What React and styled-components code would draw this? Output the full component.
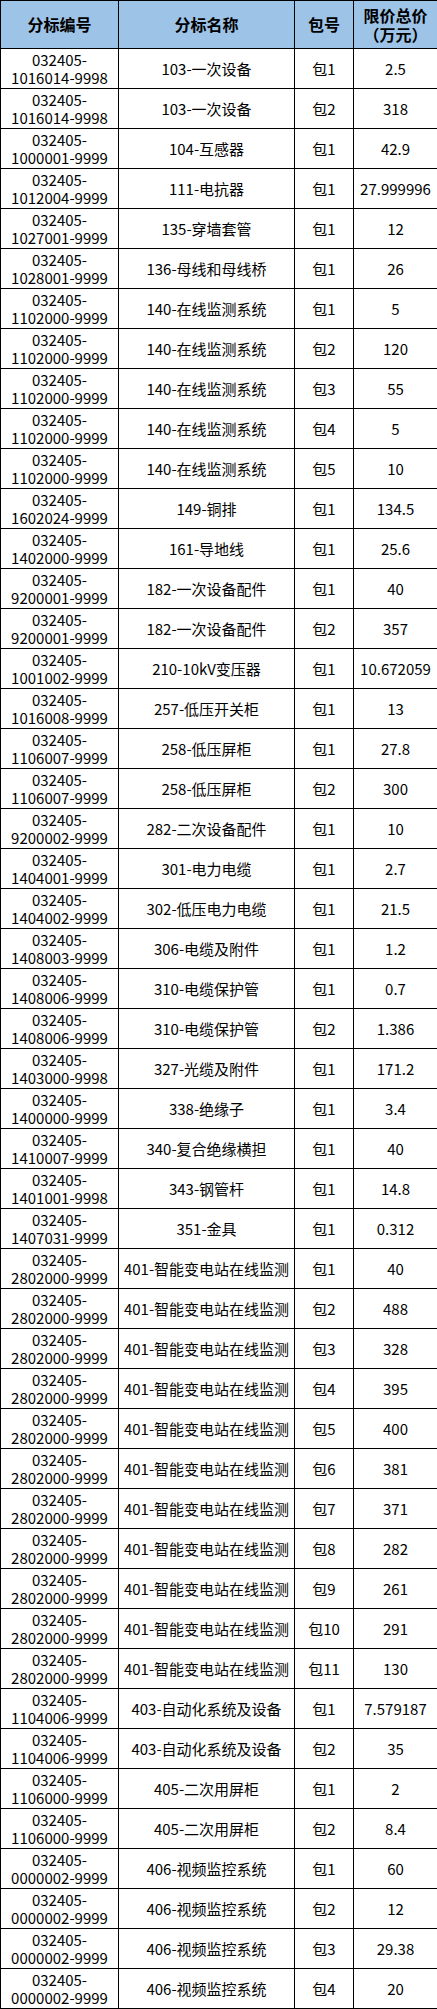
import React from "react";
import styled, { createGlobalStyle } from "styled-components";

const GlobalStyle = createGlobalStyle`
  html, body {
    margin: 0;
    padding: 0;
    background: #ffffff;
  }
`;

const Table = styled.table`
  width: 437px;
  table-layout: fixed;
  border-collapse: collapse;
  font-family: "Noto Sans CJK SC", "Liberation Sans", sans-serif;
  color: #000;
`;

const HeadCell = styled.th`
  height: 47px;
  padding: 0;
  background: #9dc3e6;
  border: 1px solid #000;
  font-size: 16px;
  font-weight: bold;
  line-height: 19px;
  text-align: center;
  vertical-align: middle;
`;

const Cell = styled.td`
  height: 39px;
  padding: 0 1px;
  border: 1px solid #000;
  font-size: 15px;
  line-height: 18px;
  text-align: center;
  vertical-align: middle;
  white-space: ${(p) => (p.$nowrap ? "nowrap" : "normal")};
  word-break: break-all;
`;

const rows = [
  ["1016014-9998", "103-一次设备", "包1", "2.5"],
  ["1016014-9998", "103-一次设备", "包2", "318"],
  ["1000001-9999", "104-互感器", "包1", "42.9"],
  ["1012004-9999", "111-电抗器", "包1", "27.999996"],
  ["1027001-9999", "135-穿墙套管", "包1", "12"],
  ["1028001-9999", "136-母线和母线桥", "包1", "26"],
  ["1102000-9999", "140-在线监测系统", "包1", "5"],
  ["1102000-9999", "140-在线监测系统", "包2", "120"],
  ["1102000-9999", "140-在线监测系统", "包3", "55"],
  ["1102000-9999", "140-在线监测系统", "包4", "5"],
  ["1102000-9999", "140-在线监测系统", "包5", "10"],
  ["1602024-9999", "149-铜排", "包1", "134.5"],
  ["1402000-9999", "161-导地线", "包1", "25.6"],
  ["9200001-9999", "182-一次设备配件", "包1", "40"],
  ["9200001-9999", "182-一次设备配件", "包2", "357"],
  ["1001002-9999", "210-10kV变压器", "包1", "10.672059"],
  ["1016008-9999", "257-低压开关柜", "包1", "13"],
  ["1106007-9999", "258-低压屏柜", "包1", "27.8"],
  ["1106007-9999", "258-低压屏柜", "包2", "300"],
  ["9200002-9999", "282-二次设备配件", "包1", "10"],
  ["1404001-9999", "301-电力电缆", "包1", "2.7"],
  ["1404002-9999", "302-低压电力电缆", "包1", "21.5"],
  ["1408003-9999", "306-电缆及附件", "包1", "1.2"],
  ["1408006-9999", "310-电缆保护管", "包1", "0.7"],
  ["1408006-9999", "310-电缆保护管", "包2", "1.386"],
  ["1403000-9998", "327-光缆及附件", "包1", "171.2"],
  ["1400000-9999", "338-绝缘子", "包1", "3.4"],
  ["1410007-9999", "340-复合绝缘横担", "包1", "40"],
  ["1401001-9998", "343-钢管杆", "包1", "14.8"],
  ["1407031-9999", "351-金具", "包1", "0.312"],
  ["2802000-9999", "401-智能变电站在线监测", "包1", "40"],
  ["2802000-9999", "401-智能变电站在线监测", "包2", "488"],
  ["2802000-9999", "401-智能变电站在线监测", "包3", "328"],
  ["2802000-9999", "401-智能变电站在线监测", "包4", "395"],
  ["2802000-9999", "401-智能变电站在线监测", "包5", "400"],
  ["2802000-9999", "401-智能变电站在线监测", "包6", "381"],
  ["2802000-9999", "401-智能变电站在线监测", "包7", "371"],
  ["2802000-9999", "401-智能变电站在线监测", "包8", "282"],
  ["2802000-9999", "401-智能变电站在线监测", "包9", "261"],
  ["2802000-9999", "401-智能变电站在线监测", "包10", "291"],
  ["2802000-9999", "401-智能变电站在线监测", "包11", "130"],
  ["1104006-9999", "403-自动化系统及设备", "包1", "7.579187"],
  ["1104006-9999", "403-自动化系统及设备", "包2", "35"],
  ["1106000-9999", "405-二次用屏柜", "包1", "2"],
  ["1106000-9999", "405-二次用屏柜", "包2", "8.4"],
  ["0000002-9999", "406-视频监控系统", "包1", "60"],
  ["0000002-9999", "406-视频监控系统", "包2", "12"],
  ["0000002-9999", "406-视频监控系统", "包3", "29.38"],
  ["0000002-9999", "406-视频监控系统", "包4", "20"],
];

export default function App() {
  return (
    <>
      <GlobalStyle />
      <Table>
        <colgroup>
          <col style={{ width: 118 }} />
          <col style={{ width: 176 }} />
          <col style={{ width: 59 }} />
          <col style={{ width: 84 }} />
        </colgroup>
        <thead>
          <tr>
            <HeadCell>分标编号</HeadCell>
            <HeadCell>分标名称</HeadCell>
            <HeadCell>包号</HeadCell>
            <HeadCell>
              限价总价
              <br />
              （万元）
            </HeadCell>
          </tr>
        </thead>
        <tbody>
          {rows.map(([code, name, pkg, price], i) => (
            <tr key={i}>
              <Cell>
                032405-
                <br />
                {code}
              </Cell>
              <Cell $nowrap>{name}</Cell>
              <Cell $nowrap>{pkg}</Cell>
              <Cell $nowrap>{price}</Cell>
            </tr>
          ))}
        </tbody>
      </Table>
    </>
  );
}
